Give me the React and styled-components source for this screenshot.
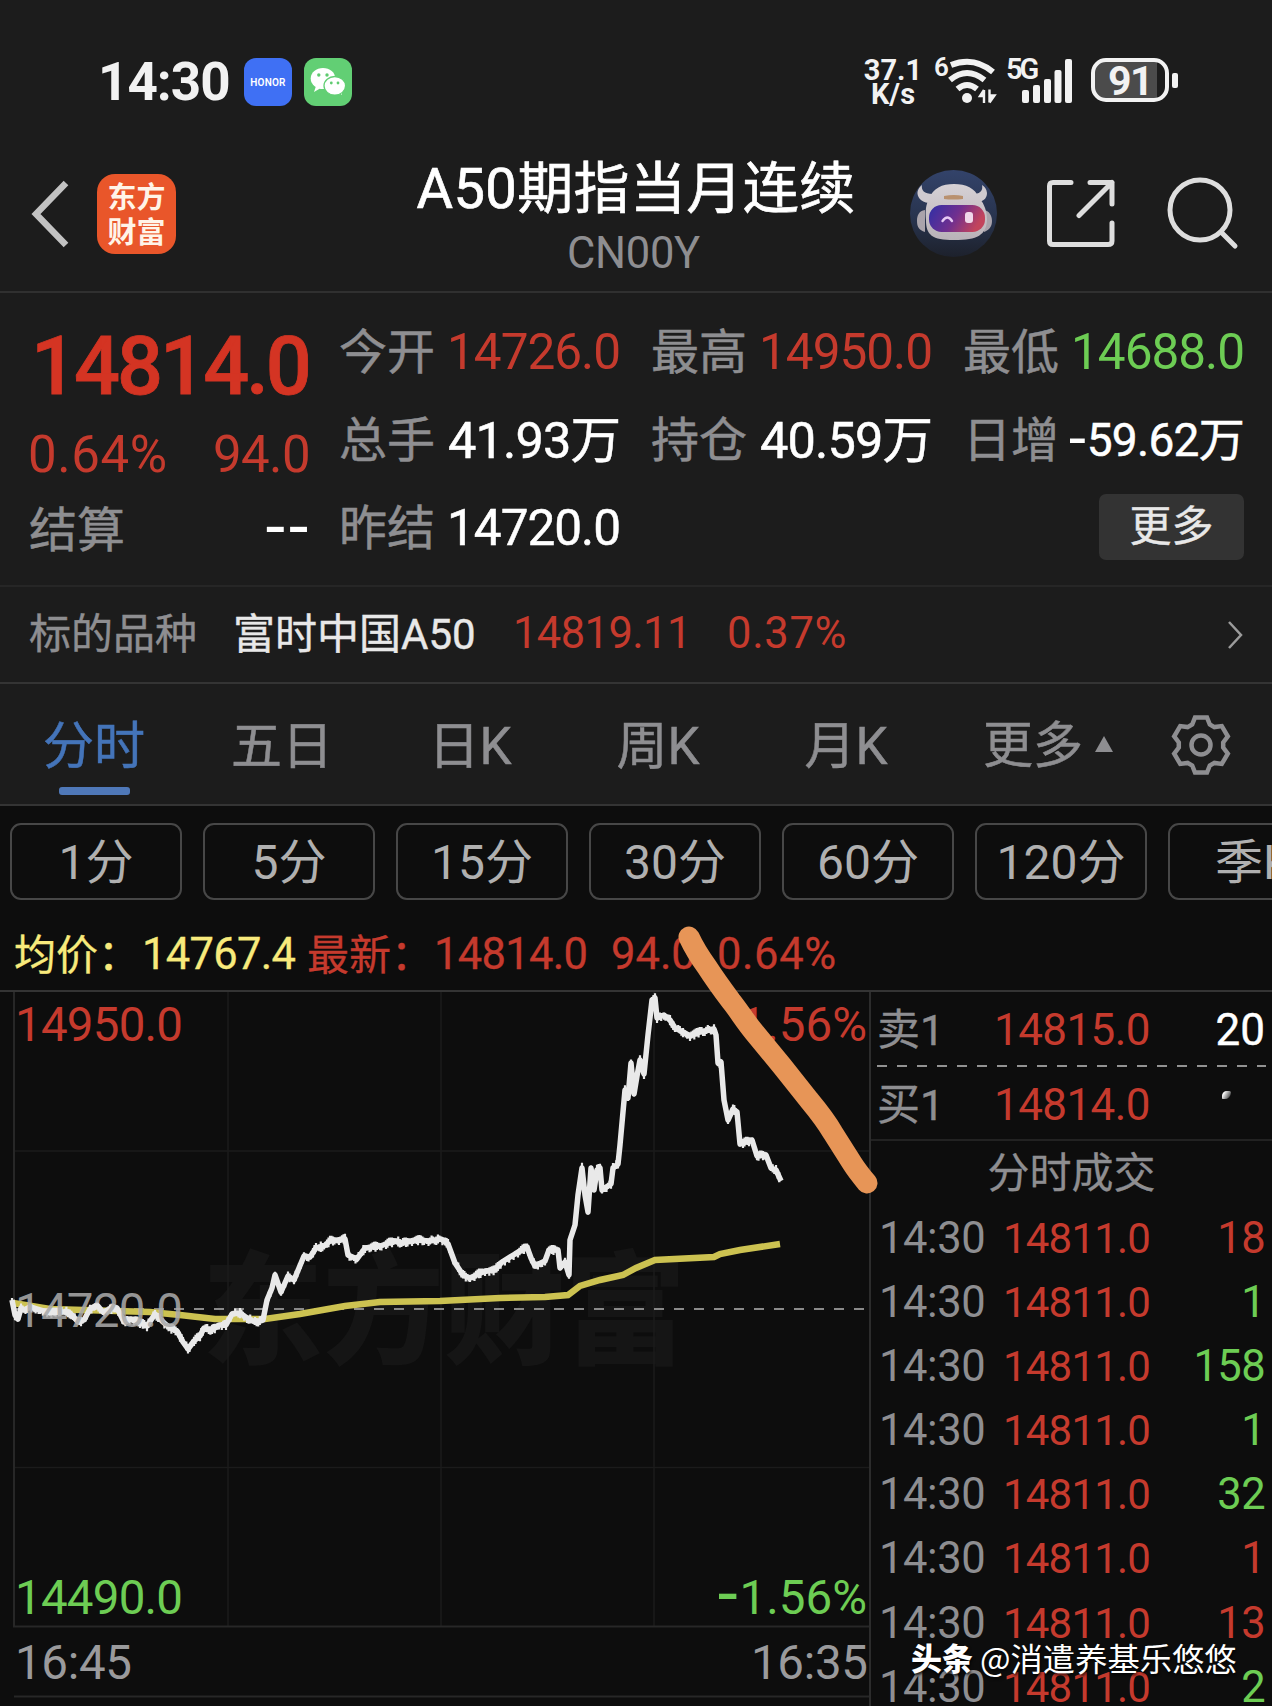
import React from 'react';
import styled, { createGlobalStyle } from 'styled-components';

const SANS = 'Roboto, "Noto Sans CJK SC", sans-serif';
const CJK = '"Noto Sans CJK SC", sans-serif';

const C = {
  panel: '#1c1c1c',
  canvas: '#0d0d0d',
  line: '#343434',
  red: '#c53a2d',
  bigRed: '#d43423',
  green: '#6dcd54',
  grey: '#8e8e91',
  dim: '#9a9a9c',
  white: '#ffffff',
  soft: '#e8e8e8',
  yellow: '#f8ea7c',
  blue: '#4474b9',
};

const Global = createGlobalStyle`
  html, body { margin: 0; padding: 0; background: ${C.canvas}; overflow: hidden; }
  * { box-sizing: border-box; }
`;

const Screen = styled.div`
  width: 1272px;
  height: 1706px;
  display: flex;
  flex-direction: column;
  overflow: hidden;
  background: ${C.canvas};
  color: ${C.white};
  font-family: ${SANS};
  white-space: nowrap;
`;

/* ---------- status bar ---------- */

const StatusBar = styled.div`
  height: 140px;
  flex: none;
  padding: 58px 94px 0 98px;
  display: flex;
  justify-content: space-between;
  background: ${C.panel};
`;

const StatusSide = styled.div`
  display: flex;
  align-items: flex-start;
`;

const Clock = styled.div`
  width: 146px;
  font-size: 53px;
  font-weight: 700;
  line-height: 49px;
  color: #f2f2f2;
  letter-spacing: -1px;
`;

const AppBadge = styled.div`
  width: 48px;
  height: 48px;
  margin-right: 12px;
  border-radius: 12px;
  display: flex;
  align-items: center;
  justify-content: center;
  background: ${(p) => p.$bg};
  color: #fff;
  font-size: 10px;
  font-weight: 600;
  letter-spacing: 0.2px;
`;

const NetSpeed = styled.div`
  width: 60px;
  margin-right: 11px;
  text-align: center;
  font-size: 29px;
  font-weight: 700;
  line-height: 24px;
  color: #f2f2f2;
`;

const SignalTag = styled.div`
  width: ${(p) => p.$w}px;
  padding-left: ${(p) => p.$pl || 0}px;
  font-size: ${(p) => p.$size}px;
  font-weight: 600;
  line-height: ${(p) => p.$lh || 23}px;
  color: #f2f2f2;
  letter-spacing: ${(p) => p.$ls || 0}px;
`;

const Battery = styled.div`
  width: 78px;
  height: 44px;
  margin-left: 9px;
  border: 4px solid #f2f2f2;
  border-radius: 15px;
  background: linear-gradient(90deg, #4b4b4b 88%, #1c1c1c 88%);
  text-align: center;
  font-size: 41px;
  font-weight: 700;
  line-height: 39px;
  color: #f2f2f2;
  letter-spacing: -1.5px;
`;

const BatteryTip = styled.div`
  width: 6px;
  height: 15px;
  margin: 15px 0 0 3px;
  border-radius: 2px;
  background: #f2f2f2;
`;

/* ---------- header ---------- */

const Header = styled.div`
  height: 153px;
  flex: none;
  display: grid;
  grid-template-columns: 416px 440px 1fr;
  background: ${C.panel};
  border-bottom: 2px solid #303030;
`;

const HeaderLeft = styled.div`
  display: flex;
  padding: 34px 0 0 30px;
`;

const BackIcon = styled.svg`
  width: 40px;
  height: 72px;
  margin-top: 4px;
`;

const BrandLogo = styled.div`
  width: 79px;
  height: 80px;
  margin-left: 27px;
  padding-top: 4px;
  border-radius: 18px;
  background: #e9562a;
  color: #fff4e8;
  text-align: center;
  font-family: ${CJK};
  font-size: 29px;
  font-weight: 700;
  line-height: 35px;
`;

const TitleBlock = styled.div`
  display: flex;
  flex-direction: column;
  align-items: center;
  padding-top: 14px;
`;

const Title = styled.div`
  font-size: 56px;
  line-height: 70px;
  letter-spacing: 0.4px;
  -webkit-text-stroke: 0.7px currentColor;
`;

const Code = styled.div`
  margin-top: 8px;
  padding-right: 5px;
  font-size: 43.5px;
  line-height: 44px;
  letter-spacing: -0.3px;
  color: ${C.grey};
`;

const HeaderActions = styled.div`
  display: flex;
  align-items: flex-start;
  padding: 30px 0 0 54px;
`;

const ActionIcon = styled.svg`
  width: ${(p) => p.$w}px;
  height: ${(p) => p.$h}px;
  margin: ${(p) => p.$mt || 0}px 0 0 ${(p) => p.$ml || 0}px;
  flex: none;
`;

/* ---------- quote ---------- */

const Quote = styled.div`
  height: 294px;
  flex: none;
  padding: 14px 28px 0 30px;
  display: grid;
  grid-template-columns: 280px 1fr;
  column-gap: 30px;
  background: ${C.panel};
  border-bottom: 2px solid #262626;
`;

const QuoteMain = styled.div`
  display: flex;
  flex-direction: column;
`;

const LastPrice = styled.div`
  height: 115px;
  padding-left: 1px;
  font-size: 81px;
  font-weight: 500;
  line-height: 120px;
  letter-spacing: -3px;
  color: ${C.bigRed};
  -webkit-text-stroke: 0.8px currentColor;
`;

const ChangeRow = styled.div`
  height: 63px;
  display: flex;
  justify-content: space-between;
  font-size: 51px;
  line-height: 66px;
  color: ${C.red};

  span:first-child { margin-left: -2px; letter-spacing: 0.6px; }
  span:last-child { letter-spacing: -0.6px; }
`;

const Metrics = styled.div`
  display: grid;
  grid-template-columns: repeat(3, 280px);
  grid-auto-rows: 88px;
  justify-content: space-between;
`;

const Metric = styled.div`
  height: 88px;
  display: flex;
  justify-content: space-between;
  align-items: center;
`;

const MetricLabel = styled.span`
  margin-left: -1px;
  padding-top: 4px;
  font-size: 48px;
  line-height: 84px;
  color: ${C.grey};
  -webkit-text-stroke: 0.5px currentColor;
`;

const MetricValue = styled.span`
  padding-top: 3px;
  font-size: ${(p) => p.$size || 49.5}px;
  line-height: 85px;
  letter-spacing: ${(p) => p.$ls ?? -1}px;
  color: ${(p) => p.$color || C.white};
  -webkit-text-stroke: ${(p) => (p.$color ? 0 : 0.5)}px currentColor;
`;

const Dash = styled.span`
  font-family: "DejaVu Sans", sans-serif;
  font-size: ${(p) => p.$size}px;
  line-height: 1px;
  -webkit-text-stroke: 0;
`;

const MoreCell = styled.div`
  grid-column: 3;
  display: flex;
  justify-content: flex-end;
  align-items: center;
`;

const MoreButton = styled.div`
  width: 145px;
  height: 66px;
  border-radius: 7px;
  background: #333333;
  color: ${C.soft};
  text-align: center;
  font-size: 42px;
  line-height: 66px;
  -webkit-text-stroke: 0.4px currentColor;
`;

/* ---------- underlying ---------- */

const Underlying = styled.div`
  height: 97px;
  flex: none;
  padding: 0 28px 0 29px;
  display: flex;
  align-items: center;
  background: ${C.panel};
  border-bottom: 2px solid ${C.line};
  font-size: 42px;
  line-height: 90px;
`;

const UnderCell = styled.span`
  width: ${(p) => p.$w}px;
  padding-bottom: ${(p) => (p.$size ? 1 : 0)}px;
  color: ${(p) => p.$color};
  font-size: ${(p) => p.$size || 42}px;
  letter-spacing: ${(p) => p.$ls || 0}px;
  -webkit-text-stroke: ${(p) => (p.$size ? 0 : 0.4)}px currentColor;
`;

const RowChevron = styled.svg`
  width: 18px;
  height: 32px;
  margin-left: auto;
`;

/* ---------- tabs ---------- */

const Tabs = styled.div`
  height: 122px;
  flex: none;
  display: flex;
  background: ${C.panel};
  border-bottom: 2px solid ${C.line};
`;

const Tab = styled.div`
  width: 188px;
  height: 111px;
  display: flex;
  flex-direction: column;
  align-items: center;
  justify-content: space-between;
  font-size: 51px;
  line-height: 125px;
  color: ${(p) => (p.$active ? C.blue : C.grey)};
  -webkit-text-stroke: 0.5px currentColor;

  span { height: 100px; }
  &::after {
    content: "";
    width: 71px;
    height: 8px;
    border-radius: 3px;
    background: ${(p) => (p.$active ? '#4f78b8' : 'transparent')};
  }
`;

const TabMore = styled.div`
  width: 231px;
  padding-left: 43px;
  display: flex;
  font-size: 50px;
  line-height: 125px;
  color: ${C.grey};
  -webkit-text-stroke: 0.5px currentColor;
`;

const Triangle = styled.svg`
  width: 18px;
  height: 16px;
  margin: 52px 0 0 12px;
`;

const Gear = styled.svg`
  width: 64px;
  height: 64px;
  margin-top: 29px;
  margin-left: -2px;
`;

/* ---------- period chips ---------- */

const Chips = styled.div`
  height: 104px;
  flex: none;
  padding: 17px 0 0 10px;
  display: flex;
  gap: 21px;
`;

const Chip = styled.div`
  width: 172px;
  height: 77px;
  flex: none;
  border: 2px solid #474747;
  border-radius: 11px;
  text-align: center;
  font-size: 48px;
  line-height: 75px;
  color: #b0b0b0;
`;

/* ---------- legend ---------- */

const Board = styled.div`
  position: relative;
  flex: 1;
  display: flex;
  flex-direction: column;
`;

const Legend = styled.div`
  height: 82px;
  flex: none;
  padding-left: 14px;
  display: flex;
  border-bottom: 2px solid ${C.line};
`;

const LegendItem = styled.span`
  width: ${(p) => p.$w}px;
  font-size: ${(p) => (p.$cjk ? 42 : 43.5)}px;
  line-height: ${(p) => (p.$cjk ? 91 : 90)}px;
  letter-spacing: ${(p) => p.$ls ?? 0}px;
  color: ${(p) => p.$color};
  -webkit-text-stroke: 0.3px currentColor;
`;

/* ---------- chart and ticks ---------- */

const Split = styled.div`
  flex: 1;
  display: grid;
  grid-template-columns: 869px 403px;
`;

const ChartSvg = styled.svg`
  display: block;
  width: 869px;
  height: 714px;
`;

const Book = styled.div`
  height: 714px;
  overflow: hidden;
  border-left: 2px solid #2c2c2c;
  padding: 0 7px 0 6px;
`;

const OrderRow = styled.div`
  height: 73px;
  display: grid;
  grid-template-columns: 117px 170px 1fr;
  align-items: center;
  font-size: 44px;
  line-height: 76px;
`;

const OrderLabel = styled.span`
  color: ${C.grey};
  font-size: 43px;
  -webkit-text-stroke: 0.4px currentColor;
`;

const OrderPrice = styled.span`
  color: ${C.red};
  letter-spacing: -0.6px;
`;

const Amount = styled.span`
  text-align: right;
  color: ${(p) => p.$color};
  -webkit-text-stroke: 0.4px currentColor;
`;

const DashLine = styled.div`
  height: 2px;
  margin-right: -1px;
  background: repeating-linear-gradient(90deg, #929292 0 10px, transparent 10px 20px);
`;

const Smudge = styled.i`
  width: 9px;
  height: 8px;
  margin-left: 58px;
  margin-top: -20px;
  border-radius: 6px 2px 8px 1px;
  background: linear-gradient(120deg, #ffffff 20%, #8a8a8a 60%, #1a1a1a 100%);
`;

const TickTitle = styled.div`
  height: 67px;
  margin: -1px -7px 0 -6px;
  border-top: 2px solid #222222;
  text-align: center;
  font-size: 42px;
  line-height: 66px;
  color: ${C.grey};
  -webkit-text-stroke: 0.3px currentColor;
`;

const TickRow = styled.div`
  height: 64.1px;
  display: grid;
  grid-template-columns: 124px 150px 1fr;
  line-height: 65px;
  padding-left: 2px;
`;

const TickTime = styled.span`
  font-size: 43.5px;
  color: ${C.grey};
  letter-spacing: -0.4px;
`;

const TickPrice = styled.span`
  font-size: 42px;
  color: ${C.red};
  letter-spacing: -0.8px;
`;

const TickVolume = styled.span`
  font-size: 43.5px;
  text-align: right;
  letter-spacing: -0.6px;
  color: ${(p) => p.$color};
`;

/* ---------- overlays ---------- */

const Marker = styled.svg`
  position: absolute;
  left: 660px;
  top: 0;
  width: 240px;
  height: 300px;
`;

const Credit = styled.div`
  position: absolute;
  left: 911px;
  bottom: 25px;
  display: flex;
  gap: 7px;
  font-family: ${CJK};
  font-size: 32.3px;
  line-height: 48px;
  text-shadow: 1px 2px 3px rgba(0, 0, 0, 0.85);

  b { font-weight: 900; font-size: 31px; }
`;

/* ---------- data ---------- */

const PRICE = [
  [12, 1300], [15, 1315], [18, 1319], [21, 1308], [24, 1310], [30, 1307], [40, 1310], [50, 1313], [60, 1312],
  [68, 1312], [73, 1316], [78, 1322], [84, 1320], [90, 1309], [97, 1305], [103, 1312], [110, 1309], [117, 1308],
  [124, 1322], [131, 1319], [140, 1323], [147, 1326], [155, 1314], [163, 1322], [170, 1328], [177, 1331],
  [183, 1342], [188, 1349], [194, 1341], [200, 1336], [204, 1328], [212, 1330], [219, 1325], [226, 1325],
  [232, 1314], [240, 1313], [247, 1318], [255, 1322], [263, 1320], [267, 1300], [272, 1288], [275, 1275],
  [281, 1292], [288, 1276], [294, 1280], [299, 1268], [304, 1256], [310, 1257], [316, 1248], [324, 1246],
  [330, 1241], [345, 1239], [348, 1255], [357, 1259], [365, 1248], [380, 1246], [395, 1241], [403, 1243],
  [415, 1240], [430, 1241], [441, 1239], [448, 1244], [455, 1263], [463, 1275], [470, 1278], [485, 1271],
  [495, 1270], [502, 1262], [515, 1254], [527, 1247], [531, 1258], [535, 1266], [545, 1261], [549, 1250],
  [558, 1250], [560, 1268], [565, 1262], [569, 1275], [570, 1240], [575, 1225], [578, 1195], [582, 1168],
  [585, 1195], [588, 1212], [591, 1168], [594, 1190], [597, 1170], [600, 1168], [602, 1190], [605, 1188],
  [611, 1184], [613, 1168], [618, 1164], [620, 1145], [625, 1090], [628, 1098], [631, 1063], [634, 1094],
  [637, 1076], [640, 1060], [644, 1074], [648, 1035], [652, 1000], [655, 998], [657, 1018], [664, 1015],
  [670, 1020], [675, 1028], [683, 1032], [690, 1036], [700, 1032], [714, 1029], [716, 1035], [718, 1063],
  [721, 1062], [724, 1100], [728, 1120], [733, 1109], [737, 1112], [740, 1144], [752, 1140], [757, 1156],
  [766, 1155], [771, 1168], [776, 1170], [781, 1181],
];

const AVERAGE = [
  [13, 1303], [50, 1309], [150, 1312], [180, 1315], [215, 1319], [265, 1319], [300, 1314], [345, 1306],
  [380, 1302], [440, 1301], [500, 1298], [545, 1297], [568, 1295], [580, 1286], [600, 1280], [623, 1275],
  [636, 1268], [655, 1260], [714, 1257], [720, 1254], [740, 1250], [780, 1244],
];

const toPoints = (list) => list.map(([x, y]) => `${x},${y}`).join(' ');

const tickBars = (list) => {
  let d = '';
  for (let i = 0; i < list.length - 1; i += 1) {
    const [x0, y0] = list[i];
    const [x1, y1] = list[i + 1];
    const n = Math.max(1, Math.round((x1 - x0) / 1.5));
    for (let k = 0; k < n; k += 1) {
      const x = x0 + ((x1 - x0) * k) / n;
      const y = y0 + ((y1 - y0) * k) / n;
      const up = 3.6 + Math.sin(x * 12.9898) * 1.6;
      const down = 3.6 + Math.sin(x * 7.233) * 1.6;
      d += `M${x.toFixed(1)} ${(y - up).toFixed(1)}V${(y + down).toFixed(1)}`;
    }
  }
  return d;
};

const gearPoints = () => {
  const pts = [];
  for (let k = 0; k < 6; k += 1) {
    const a = (k * Math.PI) / 3 - Math.PI / 2;
    [[20.5, -8.8], [27.5, -6], [27.5, 6], [20.5, 8.8]].forEach(([r, t]) => {
      const x = 32 + r * Math.cos(a) - t * Math.sin(a);
      const y = 32 + r * Math.sin(a) + t * Math.cos(a);
      pts.push(`${x.toFixed(1)},${y.toFixed(1)}`);
    });
  }
  return pts.join(' ');
};

const METRICS = [
  { label: '今开', value: '14726.0', color: C.red },
  { label: '最高', value: '14950.0', color: C.red },
  { label: '最低', value: '14688.0', color: C.green },
  { label: '总手', value: '41.93万', size: 50.5, ls: -0.9 },
  { label: '持仓', value: '40.59万', size: 50.5, ls: -0.9 },
  { label: '日增', value: '59.62万', negative: true, size: 46, ls: -0.7 },
  { label: '昨结', value: '14720.0' },
];

const TABS = ['分时', '五日', '日K', '周K', '月K'];
const PERIODS = ['1分', '5分', '15分', '30分', '60分', '120分', '季K'];
const TICKS = [
  ['18', C.red], ['1', C.green], ['158', C.green], ['1', C.green],
  ['32', C.green], ['1', C.red], ['13', C.red], ['2', C.green],
];

function WechatIcon() {
  return (
    <svg width="48" height="48" viewBox="0 0 48 48">
      <path d="M12 28l-2 6 6-3.500z" fill="#fff" />
      <ellipse cx="19" cy="20.500" rx="12.300" ry="10.500" fill="#fff" />
      <path d="M34 34l4 3-1-5z" fill="#fff" />
      <ellipse cx="30.800" cy="27.800" rx="10.800" ry="9.300" fill="#fff" stroke="#62cf74" strokeWidth="1.300" />
      <g fill="#5fcb70">
        <circle cx="14.800" cy="17" r="1.700" />
        <circle cx="23" cy="17" r="1.700" />
        <circle cx="27.300" cy="25" r="1.400" />
        <circle cx="34" cy="25" r="1.400" />
      </g>
    </svg>
  );
}

function WifiIcon() {
  return (
    <ActionIcon $w={50} $h={48} viewBox="948 58 50 48">
      <g fill="none" stroke="#f2f2f2" strokeWidth="6" strokeLinecap="butt">
        <path d="M951 65 Q974 56 993 72" />
        <path d="M950 80 Q967 66 984.500 80" />
        <path d="M957.500 89 Q967 81 977 89" />
      </g>
      <circle cx="967" cy="98" r="5" fill="#f2f2f2" />
      <path d="M984 90v13M984 90l-4 6h4M989.500 102.500v-13M989.500 102.500l5-7h-5" stroke="#f2f2f2" strokeWidth="2.400" fill="#f2f2f2" />
    </ActionIcon>
  );
}

function CellBars() {
  return (
    <ActionIcon $w={62} $h={48} $ml={-15} viewBox="1021 58 62 48">
      <g fill="#f2f2f2">
        <rect x="1023" y="90" width="7" height="13" rx="2" />
        <rect x="1034" y="85" width="7" height="18" rx="2" />
        <rect x="1045" y="79" width="7" height="24" rx="2" />
        <rect x="1055.500" y="70" width="7" height="33" rx="2" />
        <rect x="1066" y="59" width="7" height="44" rx="2" />
      </g>
    </ActionIcon>
  );
}

function Assistant() {
  return (
    <ActionIcon $w={87} $h={87} viewBox="0 0 87 87">
      <defs>
        <linearGradient id="visor" x1="0" x2="1" y1="0" y2="0.300">
          <stop offset="0" stopColor="#2f2fa6" />
          <stop offset="0.550" stopColor="#702f8f" />
          <stop offset="1" stopColor="#c2445c" />
        </linearGradient>
        <linearGradient id="sky" x1="0" x2="0" y1="0" y2="1">
          <stop offset="0" stopColor="#33436a" />
          <stop offset="0.600" stopColor="#27324b" />
          <stop offset="1" stopColor="#1d212c" />
        </linearGradient>
        <linearGradient id="shell" x1="0" x2="0" y1="0" y2="1">
          <stop offset="0" stopColor="#d6d1d5" />
          <stop offset="1" stopColor="#b9b2b8" />
        </linearGradient>
      </defs>
      <circle cx="43.500" cy="43.500" r="43.500" fill="url(#sky)" />
      <path d="M19 33c-9-1-12-7-11.500-11 .5-3 2-5 4.500-7-1 5 2 9 11 9zM68 32c7-1 9-5 9-9-.5-4-2-6-5-8 1 5-1 8-7 9z" fill="#cfcacf" />
      <path d="M15 40c-6 1-8 5-8 11s2 9 8 11zM74 40c5 1 8 5 8 11s-3 9-8 11z" fill="#a9a3ab" />
      <path d="M19 29C23 18 32 14 44 14s21 4 25 14c3 3 8 10 8 22-1 15-9 20-33 20-22 0-28-5-28-20-1-9 0-16 3-21z" fill="url(#shell)" />
      <path d="M34 26q10-2 19 0v3q-10 1-19 0z" fill="#b9916f" />
      <rect x="19" y="35" width="56" height="27" rx="12.500" fill="url(#visor)" />
      <path d="M32.500 51q5-7 9.500 0" fill="none" stroke="#e7c8f4" strokeWidth="2.400" strokeLinecap="round" />
      <rect x="55" y="42" width="8" height="11" rx="3" fill="#f0d8ea" />
    </ActionIcon>
  );
}

function PriceChart() {
  const label = { fontFamily: SANS, fontSize: 47.5 };
  return (
    <ChartSvg viewBox="0 992 869 714">
      <text x="202" y="1354" textLength="484" lengthAdjust="spacingAndGlyphs" fontFamily={CJK} fontSize="122" fontWeight="900" fill="#151515">东方财富</text>
      <g stroke="#1b1b1b" strokeWidth="1.500">
        <path d="M228 992V1626M441 992V1626M654 992V1626" />
        <path d="M14 1151H869M14 1467.500H869" />
      </g>
      <path d="M14 992V1627M13 1626.500H869M14 1696.500H869" stroke="#272727" strokeWidth="2" />
      <path d="M14 1309H866" stroke="#8a8a8a" strokeWidth="2" strokeDasharray="10 10" />
      <polyline points={toPoints(AVERAGE)} fill="none" stroke="#ccc251" strokeWidth="6.500" />
      <polyline points={toPoints(PRICE)} fill="none" stroke="#e9e9e9" strokeWidth="5.500" strokeLinejoin="round" />
      <path d={tickBars(PRICE)} fill="none" stroke="#e9e9e9" strokeWidth="2.200" />
      <g {...label}>
        <text x="15" y="1041" textLength="168" fill={C.red}>14950.0</text>
        <text x="15" y="1327" textLength="168" fill="#a8a8a8" fillOpacity="0.880">14720.0</text>
        <text x="15" y="1614" textLength="168" fill={C.green}>14490.0</text>
        <text x="15" y="1679" textLength="117" fill={C.dim}>16:45</text>
        <text x="751" y="1679" textLength="117" fill={C.dim}>16:35</text>
        <text x="867" y="1041" textAnchor="end" fill={C.red}>1.56%</text>
        <text x="867" y="1614" textAnchor="end" fill={C.green}>
          <tspan fontFamily="DejaVu Sans" fontSize="66">-</tspan>1.56%
        </text>
      </g>
    </ChartSvg>
  );
}

export default function App() {
  return (
    <Screen>
      <Global />
      <StatusBar>
        <StatusSide>
          <Clock>14:30</Clock>
          <AppBadge $bg="#3f70f4">HONOR</AppBadge>
          <AppBadge $bg="#62cf74"><WechatIcon /></AppBadge>
        </StatusSide>
        <StatusSide>
          <NetSpeed>37.1<br />K/s</NetSpeed>
          <SignalTag $w={14} $size={26} $lh={18}>6</SignalTag>
          <WifiIcon />
          <SignalTag $w={37} $pl={8} $size={29} $ls={-3}>5G</SignalTag>
          <CellBars />
          <Battery>91</Battery>
          <BatteryTip />
        </StatusSide>
      </StatusBar>

      <Header>
        <HeaderLeft>
          <BackIcon viewBox="0 0 40 72" fill="none" stroke="#c2c2c2" strokeWidth="6.500">
            <path d="M36 5L6 36L36 67" />
          </BackIcon>
          <BrandLogo>东方<br />财富</BrandLogo>
        </HeaderLeft>
        <TitleBlock>
          <Title>A50期指当月连续</Title>
          <Code>CN00Y</Code>
        </TitleBlock>
        <HeaderActions>
          <Assistant />
          <ActionIcon $w={70} $h={70} $mt={9} $ml={49} viewBox="0 0 70 70" fill="none" stroke="#dedede" strokeWidth="5" strokeLinecap="round" strokeLinejoin="round">
            <path d="M25 3.500H7Q3.500 3.500 3.500 7V62Q3.500 65.500 7 65.500H62Q66 65.500 66 62V44M44 3.500H66V25M66 3.500L33 36.500" />
          </ActionIcon>
          <ActionIcon $w={76} $h={76} $mt={6} $ml={50} viewBox="0 0 76 76" fill="none" stroke="#dedede" strokeWidth="5" strokeLinecap="round">
            <circle cx="34" cy="34" r="30" />
            <path d="M56 57L69 70" />
          </ActionIcon>
        </HeaderActions>
      </Header>

      <Quote>
        <QuoteMain>
          <LastPrice>14814.0</LastPrice>
          <ChangeRow><span>0.64%</span><span>94.0</span></ChangeRow>
          <Metric>
            <MetricLabel>结算</MetricLabel>
            <MetricValue $ls={0}><Dash $size={64}>--</Dash></MetricValue>
          </Metric>
        </QuoteMain>
        <Metrics>
          {METRICS.map((m) => (
            <Metric key={m.label}>
              <MetricLabel>{m.label}</MetricLabel>
              <MetricValue $color={m.color} $size={m.size} $ls={m.ls}>
                {m.negative && <Dash $size={56}>-</Dash>}
                {m.value}
              </MetricValue>
            </Metric>
          ))}
          <MoreCell><MoreButton>更多</MoreButton></MoreCell>
        </Metrics>
      </Quote>

      <Underlying>
        <UnderCell $w={204} $color={C.grey}>标的品种</UnderCell>
        <UnderCell $w={280} $color={C.soft}>富时中国A50</UnderCell>
        <UnderCell $w={214} $color={C.red} $size={43.5} $ls={-0.6}>14819.11</UnderCell>
        <UnderCell $w={140} $color={C.red} $size={43.5} $ls={0.7}>0.37%</UnderCell>
        <RowChevron viewBox="0 0 18 32" fill="none" stroke="#9b9b9b" strokeWidth="2.500">
          <path d="M3 3L15 16L3 29" />
        </RowChevron>
      </Underlying>

      <Tabs>
        {TABS.map((t, i) => (
          <Tab key={t} $active={i === 0}><span>{t}</span></Tab>
        ))}
        <TabMore>
          更多
          <Triangle viewBox="0 0 18 16"><path d="M9 0L18 16H0z" fill={C.grey} /></Triangle>
        </TabMore>
        <Gear viewBox="0 0 64 64" fill="none" stroke={C.grey} strokeWidth="4.500" strokeLinejoin="miter">
          <polygon points={gearPoints()} />
          <circle cx="32" cy="32" r="9.500" />
        </Gear>
      </Tabs>

      <Chips>
        {PERIODS.map((p) => <Chip key={p}>{p}</Chip>)}
      </Chips>

      <Board>
        <Legend>
          <LegendItem $cjk $w={128} $color={C.yellow}>均价：</LegendItem>
          <LegendItem $w={165} $ls={-0.7} $color={C.yellow}>14767.4</LegendItem>
          <LegendItem $cjk $w={127} $color={C.red}>最新：</LegendItem>
          <LegendItem $w={177} $ls={-0.7} $color={C.red}>14814.0</LegendItem>
          <LegendItem $w={106} $color={C.red}>94.0</LegendItem>
          <LegendItem $w={130} $ls={0.6} $color={C.red}>0.64%</LegendItem>
        </Legend>
        <Split>
          <PriceChart />
          <Book>
            <OrderRow>
              <OrderLabel>卖1</OrderLabel>
              <OrderPrice>14815.0</OrderPrice>
              <Amount $color={C.white}>20</Amount>
            </OrderRow>
            <DashLine />
            <OrderRow>
              <OrderLabel>买1</OrderLabel>
              <OrderPrice>14814.0</OrderPrice>
              <Smudge />
            </OrderRow>
            <TickTitle>分时成交</TickTitle>
            {TICKS.map(([volume, color], i) => (
              <TickRow key={i}>
                <TickTime>14:30</TickTime>
                <TickPrice>14811.0</TickPrice>
                <TickVolume $color={color}>{volume}</TickVolume>
              </TickRow>
            ))}
          </Book>
        </Split>
        <Marker viewBox="660 910 240 300">
          <path d="M689 937C695 950 699 956 707 967C716 981 722 989 731 1001C739 1011 745 1021 754 1032L782 1066L809 1100C819 1112 826 1121 833 1133L852 1163C857 1171 862 1177 867 1183" fill="none" stroke="#e79557" strokeWidth="21" strokeLinecap="round" strokeLinejoin="round" />
        </Marker>
        <Credit><b>头条</b><span>@消遣养基乐悠悠</span></Credit>
      </Board>
    </Screen>
  );
}
